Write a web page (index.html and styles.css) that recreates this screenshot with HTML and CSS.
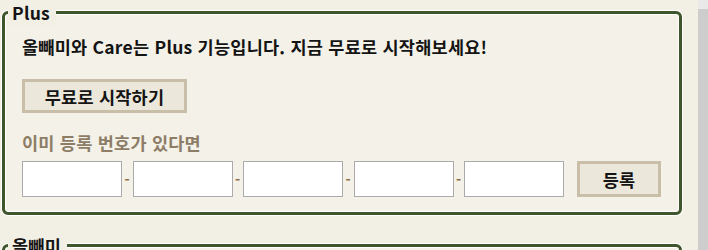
FILE: index.html
```html
<!DOCTYPE html>
<html lang="ko">
<head>
    <meta charset="UTF-8">
    <title>Plus</title>
    <link rel="stylesheet" href="styles.css">
</head>
<body>
    <div class="page">
        <!-- Plus -->
        <fieldset class="box">
            <legend>Plus</legend>
            <p class="intro">올빼미와 Care는 Plus 기능입니다. 지금 무료로 시작해보세요!</p>
            <button type="button" class="btn start-btn">무료로 시작하기</button>
            <label class="serial-label">이미 등록 번호가 있다면</label>
            <div class="serial-row">
                <input type="text" class="serial">
                <span class="dash">-</span>
                <input type="text" class="serial">
                <span class="dash">-</span>
                <input type="text" class="serial">
                <span class="dash">-</span>
                <input type="text" class="serial">
                <span class="dash">-</span>
                <input type="text" class="serial">
                <button type="button" class="btn register-btn">등록</button>
            </div>
        </fieldset>

        <!-- 올빼미 -->
        <fieldset class="box">
            <legend>올빼미</legend>
            <p class="intro">&nbsp;</p>
            <p class="intro">&nbsp;</p>
        </fieldset>
    </div>

    <!-- Scrollbar -->
    <div class="scrollbar">
        <div class="scroll-up"></div>
    </div>
</body>
</html>
```

FILE: styles.css
```css
/* Base */
body {
    margin: 0;
    display: flex;
    min-height: 100vh;
    background-color: #f2efe4;
    color: #141414;
    font-family: "Noto Sans CJK KR", "Noto Sans", sans-serif;
    font-size: 17.5px;
    font-weight: bold;
    letter-spacing: 0.25px;
    overflow: hidden;
}

.page {
    flex: 1;
}

/* Fieldset boxes */
.box {
    margin: 0 16px 18px 2px;
    padding: 10px 17px 15px;
    border: 3px solid #3f552c;
    border-radius: 6px;
    background-color: #f3f1e8;
    box-shadow: 0 0 0 1px #fff, inset 0 0 0 1px #fff;
}

.box legend {
    margin-left: -14px;
    padding: 0 6px 0 4px;
    line-height: 25px;
    background-color: #f2efe4;
}

.intro {
    margin: 0;
    line-height: 24px;
}

/* Buttons */
.btn {
    font-family: inherit;
    font-size: 17.5px;
    font-weight: bold;
    letter-spacing: 0.25px;
    color: #141414;
    background-color: #ece7db;
    border: 3px solid #c9bea7;
    cursor: pointer;
}

.start-btn {
    display: block;
    margin-top: 20px;
    width: 165px;
    height: 34px;
    padding: 0;
}

.serial-label {
    display: block;
    margin-top: 18px;
    line-height: 24px;
    color: #8d7d66;
}

/* Serial number row */
.serial-row {
    display: flex;
    align-items: center;
    margin-top: 6px;
}

.serial {
    box-sizing: border-box;
    width: 100px;
    height: 36px;
    margin: 0;
    border: 1px solid #ababab;
    background-color: #fff;
}

.dash {
    width: 10.5px;
    text-align: center;
    font-size: 14px;
    color: #8a6b40;
}

.register-btn {
    width: 84px;
    height: 36px;
    margin-left: 13px;
    padding: 0;
}

/* Fake scrollbar */
.scrollbar {
    width: 10px;
    background-color: #cdcdcd;
}

.scroll-up {
    height: 9px;
    background-color: #e9e9e9;
}
```
